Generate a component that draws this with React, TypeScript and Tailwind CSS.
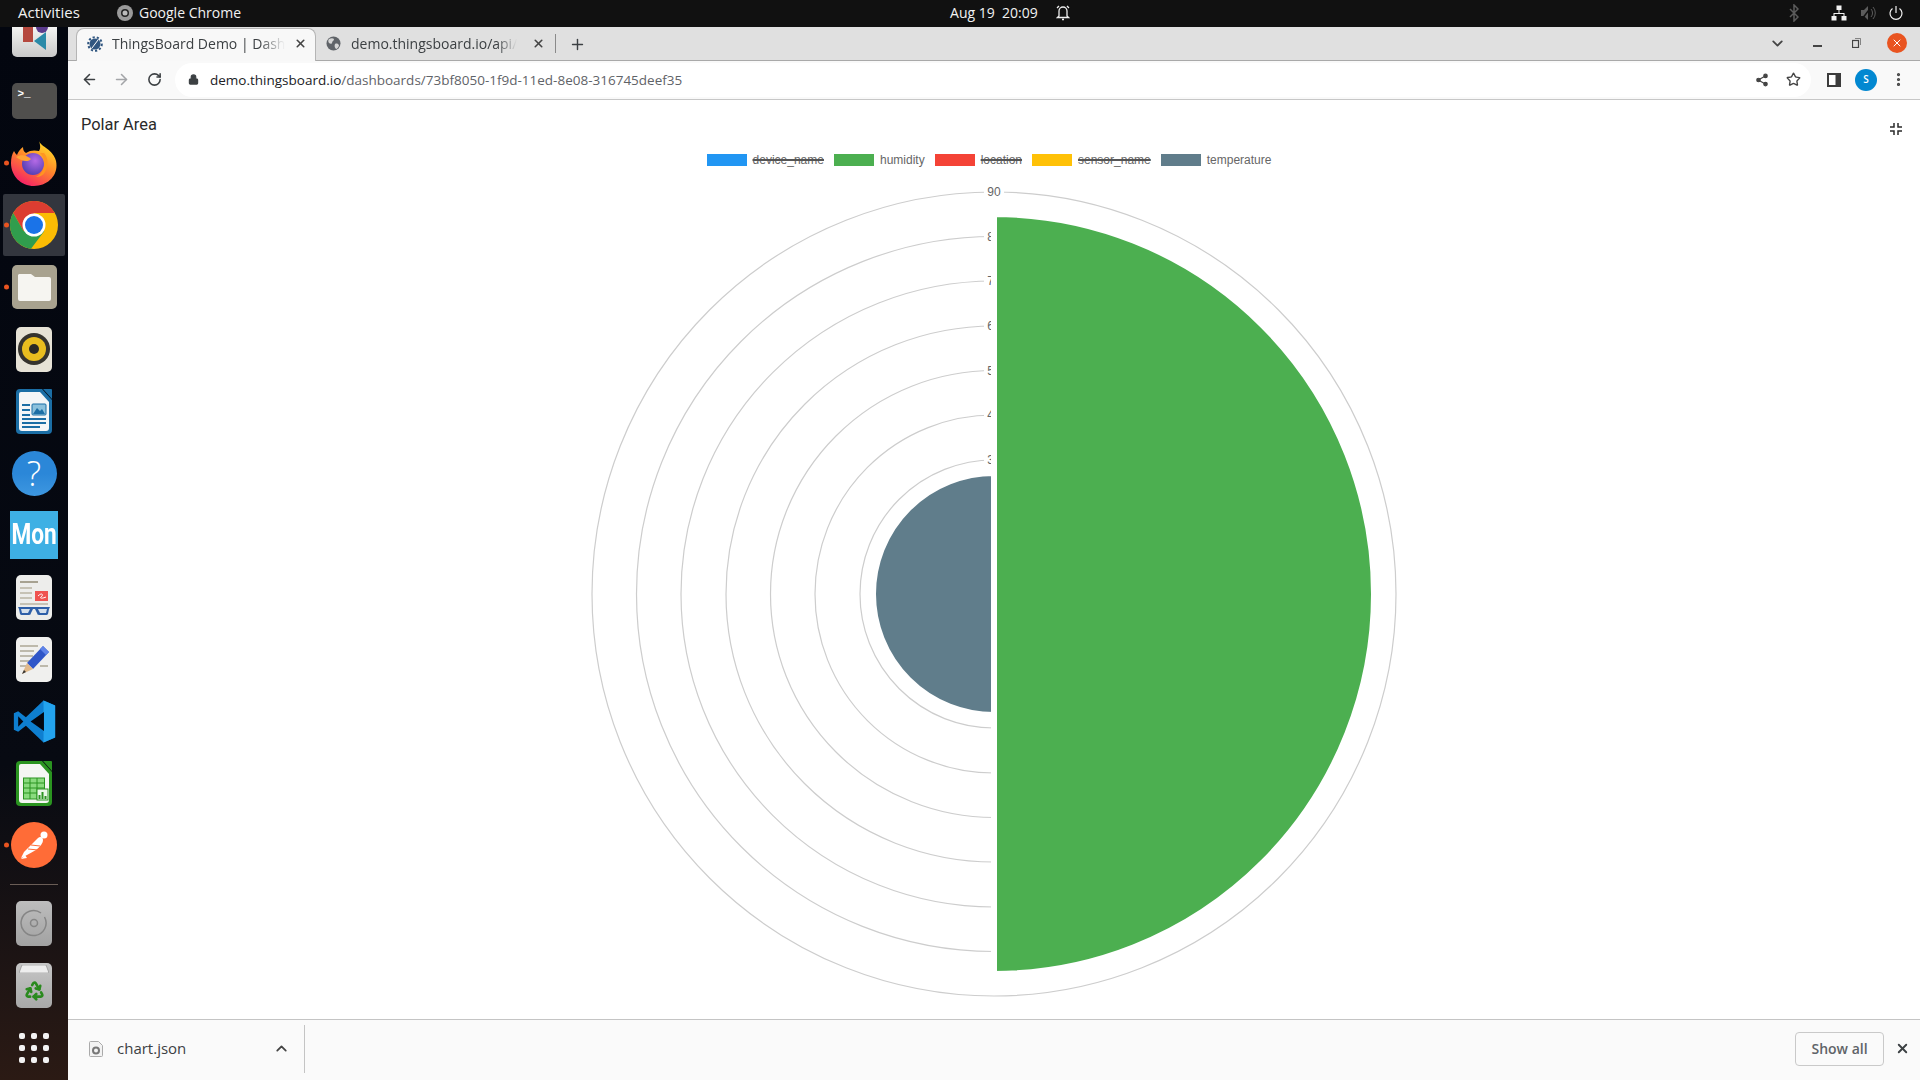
import type { ReactNode } from "react";
import { ArrowLeft, ArrowRight, ChevronDown, ChevronUp, Lock, MoreVertical, Plus, Recycle, RotateCw, Share2, Star, X } from "lucide-react";

const legend = [
  { label: "device_name", color: "bg-[#2196f3]", off: true },
  { label: "humidity", color: "bg-[#4caf50]", off: false },
  { label: "location", color: "bg-[#f44336]", off: true },
  { label: "sensor_name", color: "bg-[#ffc107]", off: true },
  { label: "temperature", color: "bg-[#607d8b]", off: false },
];

const ticks = [
  { label: "30", r: 134 },
  { label: "40", r: 179 },
  { label: "50", r: 223.5 },
  { label: "60", r: 268 },
  { label: "70", r: 313 },
  { label: "80", r: 357.5 },
  { label: "90", r: 402 },
];

function DockSlot({ h = "h-[62px]", dot, children }: { h?: string; dot?: boolean; children: ReactNode }) {
  return (
    <div className={`relative flex w-full shrink-0 items-center justify-center ${h}`}>
      {dot && <span className="absolute left-[3.5px] top-1/2 h-[5px] w-[5px] -translate-y-1/2 rounded-full bg-[#e95420]" />}
      {children}
    </div>
  );
}

function Firefox() {
  return (
    <svg width="46" height="46" viewBox="0 0 46 46">
      <defs>
        <linearGradient id="ffa" x1="0.8" y1="0" x2="0.2" y2="1">
          <stop offset="0" stopColor="#ffe226" />
          <stop offset="0.45" stopColor="#ff8a2a" />
          <stop offset="1" stopColor="#f5156c" />
        </linearGradient>
        <radialGradient id="ffb" cx="0.6" cy="0.35" r="0.7">
          <stop offset="0" stopColor="#b56ae6" />
          <stop offset="1" stopColor="#4f3db0" />
        </radialGradient>
      </defs>
      <path d="M28 1C30 7 42 9 45 21C48 35 37 46 23 46C10 46 0 36 0 23C0 18 1 14 3 11C4 13 5 14 6 15C7 12 9 9 12 7C12 10 13 12 15 13C19 10 24 10 28 11C30 8 29 4 28 1Z" fill="url(#ffa)" />
      <circle cx="22" cy="24" r="11" fill="url(#ffb)" />
      <path d="M5 17C10 14 16 15 20 19C18 22 11 22 5 17Z" fill="#ffa436" />
      <path d="M33 13C37 17 38 25 34 32C32 36 28 37 25 37C31 34 34 28 33 22C33 18 31 15 29 13Z" fill="#ff9520" />
    </svg>
  );
}

function ChromeLogo() {
  return (
    <svg width="48" height="48" viewBox="0 0 48 48">
      <circle cx="24" cy="24" r="24" fill="#fbbc04" />
      <path d="M3.200 12A24 24 0 0 1 44.800 12H24L13.600 30z" fill="#dc3d31" />
      <path d="M3.200 12L13.600 30H34.400L21 47.800A24 24 0 0 1 3.200 12z" fill="#309d4d" />
      <circle cx="24" cy="24" r="11.500" fill="#fff" />
      <circle cx="24" cy="24" r="9" fill="#1a73e8" />
    </svg>
  );
}

function Files() {
  return (
    <div className="flex h-[44px] w-[45px] items-center justify-center rounded-[5px] bg-[#a8a28f]">
      <svg width="33" height="27" viewBox="0 0 33 27">
        <path d="M1 0h12l4 3h14a2 2 0 0 1 2 2v20a2 2 0 0 1-2 2H2a2 2 0 0 1-2-2V1z" fill="#f6f5f1" />
      </svg>
    </div>
  );
}

function Rhythmbox() {
  return (
    <div className="flex h-[45px] w-[36px] items-center justify-center rounded-[5px] bg-[#e6e2d6]">
      <svg width="32" height="32" viewBox="0 0 32 32">
        <circle cx="16" cy="16" r="16" fill="#35332e" />
        <circle cx="16" cy="16" r="12" fill="#e9bd1f" />
        <circle cx="16" cy="16" r="5" fill="#2a2925" />
      </svg>
    </div>
  );
}

function Writer() {
  return (
    <svg width="36" height="45" viewBox="0 0 36 45">
      <path d="M4 0h22l10 11v30a4 4 0 0 1-4 4H4a4 4 0 0 1-4-4V4a4 4 0 0 1 4-4z" fill="#1b6ea5" />
      <path d="M5 3h19l9 10v26a3 3 0 0 1-3 3H6a3 3 0 0 1-3-3V5a2 2 0 0 1 2-2z" fill="#f4f6f7" />
      <path d="M27 0h8a1 1 0 0 1 1 1v9z" fill="#1b6ea5" />
      <rect x="6" y="15" width="8" height="2" fill="#1b6ea5" />
      <rect x="6" y="20" width="8" height="2" fill="#1b6ea5" />
      <rect x="6" y="25" width="8" height="2" fill="#1b6ea5" />
      <rect x="6" y="29" width="24" height="2" fill="#1b6ea5" />
      <rect x="6" y="33" width="24" height="2" fill="#1b6ea5" />
      <rect x="6" y="37" width="18" height="2" fill="#1b6ea5" />
      <rect x="16" y="15" width="14" height="11" rx="1" fill="#8cc1dc" stroke="#1b6ea5" />
      <path d="M17 25l4-6 3 3 2-2 3 5z" fill="#1b6ea5" />
    </svg>
  );
}

function Reader() {
  return (
    <svg width="36" height="45" viewBox="0 0 36 45">
      <rect width="36" height="45" rx="5" fill="#ededeb" />
      <rect x="4" y="6" width="18" height="2" fill="#a7a291" />
      <rect x="4" y="12" width="12" height="2" fill="#c6c2b5" />
      <rect x="4" y="17" width="12" height="2" fill="#c6c2b5" />
      <rect x="4" y="22" width="12" height="2" fill="#c6c2b5" />
      <rect x="4" y="28" width="28" height="2" fill="#c6c2b5" />
      <rect x="19" y="16" width="13" height="10" fill="#ef5350" />
      <path d="M22 21c4-4 6-1 3 1-2 2 3 1 5 0" stroke="#fff" fill="none" />
      <path d="M2 32h32l-1 2-1 5a2 2 0 0 1-2 1h-7a2 2 0 0 1-2-2l-2-4h-2l-2 4a2 2 0 0 1-2 2H6a2 2 0 0 1-2-1l-1-5z" fill="#2e5fa8" />
      <path d="M5 34h9l-2 4H6zM22 34h9l-1 4h-6z" fill="#d5e0ec" />
    </svg>
  );
}

function Pencil() {
  return (
    <svg width="36" height="45" viewBox="0 0 36 45">
      <rect width="36" height="45" rx="5" fill="#f0f0ee" />
      <rect x="4" y="8" width="18" height="2" fill="#bdb9ab" />
      <rect x="4" y="13" width="14" height="2" fill="#bdb9ab" />
      <rect x="4" y="18" width="13" height="2" fill="#bdb9ab" />
      <rect x="4" y="23" width="10" height="2" fill="#bdb9ab" />
      <rect x="4" y="28" width="6" height="2" fill="#bdb9ab" />
      <rect x="24" y="28" width="8" height="2" fill="#bdb9ab" />
      <path d="M27 9l6 6-16 17-6-6z" fill="#2f56c8" />
      <path d="M27 9l6 6-3 3-6-6z" fill="#5f83e8" />
      <path d="M11 26l6 6-11 5z" fill="#e0b98a" />
      <path d="M8 33l-2 4 4-2z" fill="#333" />
    </svg>
  );
}

function VsCode() {
  return (
    <svg width="43" height="43" viewBox="0 0 100 100">
      <path d="M71 99L30 60l-18 14-10-5V31l10-5 18 14L71 1l27 12v74z" fill="#0e7fd0" />
      <path d="M71 1l27 12v74L71 99z" fill="#23a3ee" />
      <path d="M72 28L41 50l31 22z" fill="#03060f" />
      <path d="M12 38v24l12-12z" fill="#03060f" />
    </svg>
  );
}

function Calc() {
  return (
    <svg width="36" height="45" viewBox="0 0 36 45">
      <path d="M4 0h22l10 11v30a4 4 0 0 1-4 4H4a4 4 0 0 1-4-4V4a4 4 0 0 1 4-4z" fill="#2a9420" />
      <path d="M5 3h19l9 10v26a3 3 0 0 1-3 3H6a3 3 0 0 1-3-3V5a2 2 0 0 1 2-2z" fill="#f4f6f3" />
      <path d="M27 0h8a1 1 0 0 1 1 1v9z" fill="#2a9420" />
      <rect x="7.500" y="17" width="21" height="21" fill="#8adb7e" stroke="#2a9420" />
      <path d="M7.500 22h21M7.500 27h21M7.500 32h21M14 17v21M21 17v21" stroke="#2a9420" strokeWidth="1" />
      <rect x="21" y="28" width="11" height="11" fill="#eaf7e8" stroke="#2a9420" />
      <path d="M23.500 38v-4M26.500 38v-7M29.500 38v-3" stroke="#2a9420" strokeWidth="2" />
    </svg>
  );
}

function Postman() {
  return (
    <svg width="46" height="46" viewBox="0 0 46 46">
      <circle cx="23" cy="23" r="23" fill="#ff6c37" />
      <circle cx="33" cy="13" r="3.500" fill="#fff" />
      <path d="M10 36l3-6 14-14c2-2 5-1 5 2 0 3-3 7-7 10l-9 5z" fill="#fff" />
      <path d="M10 37l6-1-2-3z" fill="#fff" />
      <path d="M17 27l10 1M20 23l9 1" stroke="#ff6c37" strokeWidth="1" />
    </svg>
  );
}

function Disc() {
  return (
    <div className="flex h-[45px] w-[36px] items-center justify-center rounded-[5px] bg-gradient-to-b from-[#bdbdbd] to-[#a2a2a2]">
      <svg width="28" height="28" viewBox="0 0 28 28" fill="none" stroke="#858585" strokeWidth="1.500">
        <path d="M21 4a12.500 12.500 0 1 0 3.500 4" />
        <circle cx="14" cy="14" r="3.500" />
      </svg>
    </div>
  );
}

function Trash() {
  return (
    <div className="relative flex h-[45px] w-[36px] items-end justify-center rounded-[5px] bg-gradient-to-b from-[#c6c6c6] to-[#a8a8a8] pb-[7px]">
      <svg className="absolute left-[3px] top-[2px]" width="30" height="8" viewBox="0 0 30 8">
        <path d="M3 0h24l3 8H0z" fill="#eee" stroke="#777" strokeWidth="0.500" />
      </svg>
      <Recycle size={21} strokeWidth={3} className="text-[#2a8a1e]" />
    </div>
  );
}

function Dock() {
  return (
    <div className="flex h-full w-[68px] shrink-0 flex-col overflow-hidden bg-gradient-to-b from-[#03060f] via-[#070a12] via-70% to-[#2b1a14]">
      <DockSlot h="h-[43px] items-end pb-[13px]">
        <div className="relative h-[30px] w-[45px] overflow-hidden rounded-b-[5px] bg-gradient-to-b from-[#f4f4f2] to-[#c9c9c9]">
          <span className="absolute left-[11px] top-0 h-[15px] w-[10px] bg-[#b5483e]" />
          <span className="absolute left-[24px] top-[-6px] h-[12px] w-[12px] rounded-full bg-[#5a3a8c]" />
          <svg className="absolute left-[22px] top-[5px]" width="12" height="18" viewBox="0 0 12 18"><path d="M12 0v18L0 9z" fill="#2a8aa8" /></svg>
        </div>
      </DockSlot>
      <DockSlot>
        <div className="h-[36px] w-[45px] rounded-[5px] bg-[#504f4d] pl-[6px] pt-[4px] font-['Liberation_Mono',monospace] text-[11px] font-bold leading-[14px] text-white">&gt;_</div>
      </DockSlot>
      <DockSlot dot><Firefox /></DockSlot>
      <DockSlot dot>
        <div className="flex h-[62px] w-[62px] items-center justify-center rounded-[2px] bg-[#33363e]"><ChromeLogo /></div>
      </DockSlot>
      <DockSlot dot><Files /></DockSlot>
      <DockSlot><Rhythmbox /></DockSlot>
      <DockSlot><Writer /></DockSlot>
      <DockSlot>
        <div className="flex h-[45px] w-[45px] items-center justify-center rounded-full bg-gradient-to-b from-[#2b87d8] via-[#2b87d8] via-50% to-[#3d97e0] font-['Open_Sans',sans-serif] text-[34px] font-light leading-none text-white">?</div>
      </DockSlot>
      <DockSlot>
        <div className="flex h-[48px] w-[48px] items-center justify-center overflow-hidden bg-[#3eb0e4] font-['Roboto',sans-serif] text-[29px] font-bold text-white">
          <span className="scale-x-[0.78]">Mon</span>
        </div>
      </DockSlot>
      <DockSlot><Reader /></DockSlot>
      <DockSlot><Pencil /></DockSlot>
      <DockSlot><VsCode /></DockSlot>
      <DockSlot><Calc /></DockSlot>
      <DockSlot dot><Postman /></DockSlot>
      <DockSlot h="h-[16px]"><div className="h-px w-[48px] bg-[#6a5d56]" /></DockSlot>
      <DockSlot><Disc /></DockSlot>
      <DockSlot><Trash /></DockSlot>
      <DockSlot h="h-[64px]">
        <div className="grid grid-cols-3 gap-[6px]">
          {Array.from({ length: 9 }).map((_, i) => (
            <span key={i} className="h-[6px] w-[6px] rounded-[2px] bg-[#f2f2f2]" />
          ))}
        </div>
      </DockSlot>
    </div>
  );
}

function TopBar() {
  return (
    <div className="flex h-[27px] shrink-0 items-center bg-[#111111] pb-[2px] font-['Open_Sans',sans-serif] text-[14px] text-[#f2f2f2]">
      <div className="w-[117px] pl-[18px] text-[15px]">Activities</div>
      <div className="flex items-center gap-[6px]">
        <svg width="16" height="16" viewBox="0 0 16 16">
          <circle cx="8" cy="8" r="8" fill="#9a9a9a" />
          <circle cx="8" cy="8" r="4" fill="#222" />
          <circle cx="8" cy="8" r="2.500" fill="#bbb" />
        </svg>
        <span>Google Chrome</span>
      </div>
      <div className="ml-[709px] flex items-center gap-[19px]">
        <span className="w-[87px] whitespace-nowrap">Aug 19&nbsp; 20:09</span>
        <svg width="14" height="16" viewBox="0 0 14 16" fill="none" stroke="#eee" strokeWidth="1.300">
          <path d="M3 11V6a4 4 0 0 1 8 0v5l1.500 1.500h-11zM6 14.500h2M1 3l2-2M13 3l-2-2" />
        </svg>
      </div>
      <div className="ml-auto flex items-center">
        <svg width="10" height="18" viewBox="0 0 10 18" fill="none" stroke="#5c5c5c" strokeWidth="1.500">
          <path d="M1 5l8 8-4 4V1l4 4-8 8" />
        </svg>
        <svg className="ml-[32px]" width="16" height="16" viewBox="0 0 16 16" fill="#f2f2f2">
          <rect x="5.500" y="0.500" width="5" height="4.500" />
          <rect x="0.500" y="11" width="5" height="4.500" />
          <rect x="10.500" y="11" width="5" height="4.500" />
          <path d="M7.500 5h1v3H13.500v3h-1V9h-9v2h-1V8h5z" />
        </svg>
        <svg className="ml-[14px]" width="15" height="16" viewBox="0 0 15 16" fill="#5c5c5c">
          <path d="M0 5h3l4-4v14l-4-4H0z" />
          <path d="M10 4a6 6 0 0 1 0 8M12 2a9 9 0 0 1 0 12" fill="none" stroke="#5c5c5c" />
          <path d="M1 14L11 1" stroke="#111" strokeWidth="1.500" />
        </svg>
        <svg className="ml-[13px] mr-[17px]" width="14" height="16" viewBox="0 0 14 16" fill="none" stroke="#f2f2f2" strokeWidth="1.200">
          <path d="M7 1v7M3.500 3.500a6 6 0 1 0 7 0" />
        </svg>
      </div>
    </div>
  );
}

function TabStrip() {
  return (
    <div className="flex h-[34px] shrink-0 items-end border-b border-[#a9a9a9] bg-[#e0e0e0] pl-[8px] font-['Open_Sans',sans-serif] text-[14px] text-[#3c4043]">
      <div className="relative z-10 -mb-px flex h-[33px] w-[240px] items-center rounded-t-[8px] border border-b-0 border-[#b5b5b5] bg-[#f8f8f8] pb-[3px] pl-[10px] pr-[8px]">
        <svg width="16" height="16" viewBox="0 0 16 16" className="shrink-0">
          <circle cx="8" cy="8" r="5.500" fill="#305680" />
          <circle cx="8" cy="8" r="6.800" fill="none" stroke="#305680" strokeWidth="2" strokeDasharray="2.200 2" />
          <path d="M5 12l6-8" stroke="#fff" strokeWidth="1" />
        </svg>
        <span className="ml-[9px] whitespace-nowrap [mask-image:linear-gradient(to_right,black_85%,transparent)]">ThingsBoard Demo | Dash</span>
        <X size={13} strokeWidth={3} className="ml-auto text-[#444]" />
      </div>
      <div className="flex h-[33px] w-[239px] items-center pb-[1px] pl-[10px] pr-[10px]">
        <svg width="15" height="15" viewBox="0 0 15 15" className="shrink-0">
          <circle cx="7.500" cy="7.500" r="7" fill="#5f6368" />
          <path d="M3 3c2-1 4-1 5 0 0 2-2 2-2 4 0 1-2 1-3 0-1-1-1-3 0-4zM9 8c2-1 3 0 4 1 0 2-2 4-3 4-1-1-2-3-1-5z" fill="#d5d5d5" />
        </svg>
        <span className="ml-[10px] whitespace-nowrap [mask-image:linear-gradient(to_right,black_88%,transparent)]">demo.thingsboard.io/api/</span>
        <X size={13} strokeWidth={3} className="ml-auto text-[#444]" />
      </div>
      <div className="mb-[7px] h-[19px] w-px bg-[#8a8a8a]" />
      <Plus size={17} strokeWidth={2} className="mb-[7px] ml-[13px] text-[#3c4043]" />
      <div className="ml-auto mb-[7px] flex items-center">
        <ChevronDown size={17} className="text-[#444]" strokeWidth={2.500} />
        <div className="ml-[27px] mt-[6px] h-[1.500px] w-[9px] bg-[#444]" />
        <svg className="ml-[30px]" width="9" height="10" viewBox="0 0 9 10" fill="none" stroke="#444">
          <rect x="0.500" y="2.500" width="6" height="7" strokeWidth="1.200" />
          <path d="M3 0.500h5.500V7" strokeWidth="0.600" />
        </svg>
        <div className="ml-[26px] mr-[13px] flex h-[20px] w-[20px] items-center justify-center rounded-full bg-[#e95420]">
          <X size={12} strokeWidth={2} className="text-white" />
        </div>
      </div>
    </div>
  );
}

function Toolbar() {
  return (
    <div className="flex h-[39px] shrink-0 items-center border-b border-[#c7c7c7] bg-[#f9f9f9] pb-px font-['Open_Sans',sans-serif]">
      <ArrowLeft size={17} strokeWidth={2.200} className="ml-[13px] text-[#3c4043]" />
      <ArrowRight size={17} strokeWidth={2.200} className="ml-[15px] text-[#a3a5a8]" />
      <RotateCw size={15} strokeWidth={2.500} className="ml-[17px] text-[#3c4043]" />
      <div className="ml-[13px] flex h-[34px] w-[1636px] items-center rounded-full bg-white pl-[13px] pr-[10px]">
        <Lock size={11} fill="#3c4043" stroke="#3c4043" strokeWidth={2.500} />
        <span className="ml-[11px] whitespace-nowrap pt-px text-[13.5px] text-[#5f6368]">
          <span className="text-[#202124]">demo.thingsboard.io</span>/dashboards/73bf8050-1f9d-11ed-8e08-316745deef35
        </span>
        <div className="ml-auto flex items-center gap-[17px]">
          <Share2 size={14} fill="#444" stroke="#444" strokeWidth={2} />
          <Star size={15} strokeWidth={2.200} className="text-[#444]" />
        </div>
      </div>
      <svg className="ml-[16px]" width="14" height="14" viewBox="0 0 14 14">
        <path d="M0 0h14v14H0z" fill="#3c3c3c" />
        <path d="M2 2h6.500v10H2z" fill="#fff" />
      </svg>
      <div className="ml-[14px] flex h-[22px] w-[22px] items-center justify-center rounded-full bg-[#0288d1] text-[10px] font-semibold text-white">S</div>
      <MoreVertical size={17} strokeWidth={2.500} className="ml-[13px] text-[#444]" />
    </div>
  );
}

function PolarChart() {
  const cx = 415;
  const cy = 415;
  return (
    <svg width="830" height="830" viewBox="0 0 830 830" className="block">
      {ticks.map((t) => (
        <circle key={t.r} cx={cx} cy={cy} r={t.r} fill="none" stroke="#cdcdcd" strokeWidth="1.200" />
      ))}
      {ticks.map((t) => (
        <g key={t.label}>
          <rect x={cx - 10} y={cy - t.r - 7} width="20" height="14" fill="#fff" />
          <text x={cx} y={cy - t.r + 4} textAnchor="middle" fontFamily="Liberation Sans, sans-serif" fontSize="12" fill="#666">
            {t.label}
          </text>
        </g>
      ))}
      <path d={`M${cx} ${cy - 380}A380 380 0 0 1 ${cx} ${cy + 380}Z`} fill="#4caf50" stroke="#fff" strokeWidth="6" />
      <path d={`M${cx} ${cy - 121}A121 121 0 0 0 ${cx} ${cy + 121}Z`} fill="#607d8b" stroke="#fff" strokeWidth="6" />
    </svg>
  );
}

function Content() {
  return (
    <div className="min-h-0 flex-1 overflow-hidden bg-white">
      <div className="flex h-[48px] items-start justify-between pl-[13px] pr-[18px] pt-[14px]">
        <h2 className="font-['Roboto',sans-serif] text-[16.4px] leading-[22px] text-[#2a2a2a]">Polar Area</h2>
        <svg className="mt-[9px]" width="12" height="12" viewBox="0 0 12 12" fill="none" stroke="#2b2b2b" strokeWidth="1.500">
          <path d="M4 0v4H0M8 0v4h4M4 12V8H0M8 12V8h4" />
        </svg>
      </div>
      <div className="flex h-[24px] items-center justify-center gap-[10px] pr-[10px] font-['Liberation_Sans',sans-serif] text-[12px] text-[#666]">
        {legend.map((l) => (
          <div key={l.label} className="flex items-center gap-[6px]">
            <span className={`h-[12px] w-[40px] ${l.color}`} />
            <span className={l.off ? "line-through decoration-[#555] decoration-2" : ""}>{l.label}</span>
          </div>
        ))}
      </div>
      <div className="flex justify-center pt-[7px]">
        <PolarChart />
      </div>
    </div>
  );
}

function DownloadBar() {
  return (
    <div className="flex h-[61px] shrink-0 items-center border-t border-[#c4c4c4] bg-[#fafafa] pb-[3px] font-['Open_Sans',sans-serif]">
      <svg className="ml-[21px]" width="14" height="16" viewBox="0 0 14 16" fill="none">
        <path d="M1.500 0.500h8l4 4v10a1 1 0 0 1-1 1h-11a1 1 0 0 1-1-1v-13a1 1 0 0 1 1-1z" fill="#f2f2f2" stroke="#aaa" />
        <circle cx="7" cy="9.500" r="3" stroke="#777" strokeWidth="2" />
      </svg>
      <span className="ml-[14px] text-[15px] text-[#3c4043]">chart.json</span>
      <ChevronUp size={17} strokeWidth={2.500} className="ml-[87px] text-[#444]" />
      <div className="ml-[14px] h-[48px] w-px bg-[#c4c4c4]" />
      <button className="ml-auto h-[34px] w-[89px] rounded-[4px] border border-[#c9c9c9] text-[14px] font-semibold text-[#5f6368]">Show all</button>
      <X size={15} strokeWidth={3} className="ml-[11px] mr-[10px] text-[#3c4043]" />
    </div>
  );
}

export default function App() {
  return (
    <div className="flex h-[1080px] w-[1920px] flex-col overflow-hidden">
      <TopBar />
      <div className="flex min-h-0 flex-1">
        <Dock />
        <div className="flex min-w-0 flex-1 flex-col">
          <TabStrip />
          <Toolbar />
          <Content />
          <DownloadBar />
        </div>
      </div>
    </div>
  );
}
